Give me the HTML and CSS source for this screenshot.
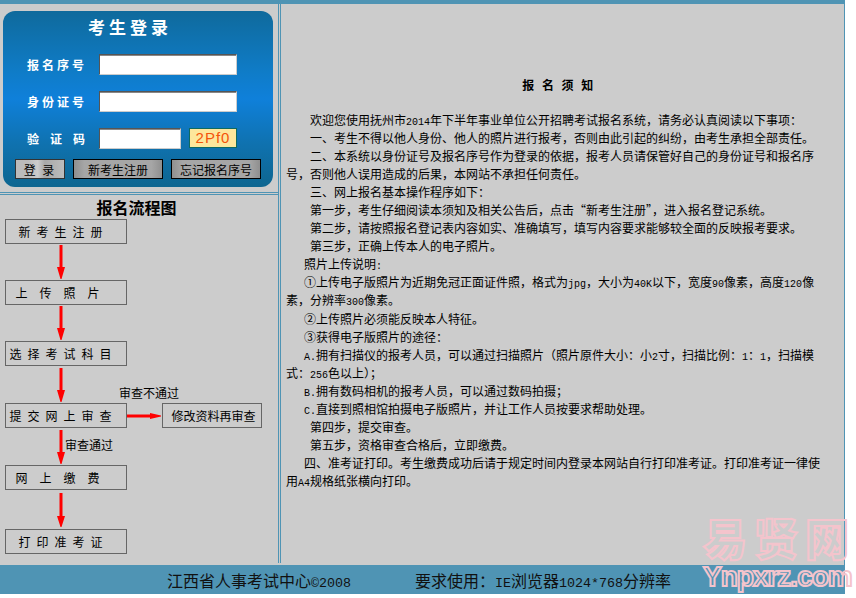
FILE: index.html
```html
<!DOCTYPE html>
<html lang="zh-CN">
<head>
    <meta charset="UTF-8">
    <meta name="viewport" content="width=device-width, initial-scale=1.0">
    <title>考生登录</title>
    <link rel="stylesheet" href="styles.css">
</head>
<body>
<div class="page">
    <div class="main">
        <div class="left">
            <div class="login-panel">
                <form class="login-card">
                    <h2 class="login-title">考生登录</h2>
                    <div class="login-row">
                        <label class="login-label" for="bmxh">报名序号</label>
                        <input class="login-input" type="text" id="bmxh">
                    </div>
                    <div class="login-row">
                        <label class="login-label" for="sfzh">身份证号</label>
                        <input class="login-input" type="text" id="sfzh">
                    </div>
                    <div class="login-row">
                        <label class="login-label wide" for="yzm">验证码</label>
                        <input class="login-input short" type="text" id="yzm">
                        <span class="captcha">2Pf0</span>
                    </div>
                    <div class="login-buttons">
                        <button class="btn btn-login" type="button">登 录</button>
                        <button class="btn btn-new" type="button">新考生注册</button>
                        <button class="btn btn-forgot" type="button">忘记报名序号</button>
                    </div>
                </form>
            </div>
            <div class="flow-panel">
                <h2 class="flow-title">报名流程图</h2>
                <div class="step s6">新考生注册</div>
                <div class="link h36">
                    <svg class="arrow" width="12" height="36" viewBox="0 0 12 36"><polygon fill="#f00" points="4.5,1 7.5,1 7.5,23 10,23 6.5,35 5.5,35 2,23 4.5,23"/></svg>
                </div>
                <div class="step s12">上传照片</div>
                <div class="link h36">
                    <svg class="arrow" width="12" height="36" viewBox="0 0 12 36"><polygon fill="#f00" points="4.5,1 7.5,1 7.5,23 10,23 6.5,35 5.5,35 2,23 4.5,23"/></svg>
                </div>
                <div class="step s6">选择考试科目</div>
                <div class="link h37">
                    <svg class="arrow" width="12" height="37" viewBox="0 0 12 37"><polygon fill="#f00" points="4.5,2 7.5,2 7.5,24 10,24 6.5,36 5.5,36 2,24 4.5,24"/></svg>
                </div>
                <div class="flow-row">
                    <div class="step s6">提交网上审查</div>
                    <svg class="arrow-right" width="35" height="12" viewBox="0 0 35 12"><polygon fill="#f00" points="0,4.5 23,4.5 23,3 34,5.5 34,6.5 23,9 23,7.5 0,7.5"/></svg>
                    <div class="step side">修改资料再审查</div>
                    <span class="note note-fail">审查不通过</span>
                </div>
                <div class="link h37">
                    <svg class="arrow" width="12" height="37" viewBox="0 0 12 37"><polygon fill="#f00" points="4.5,2 7.5,2 7.5,24 10,24 6.5,36 5.5,36 2,24 4.5,24"/></svg>
                    <span class="note note-pass">审查通过</span>
                </div>
                <div class="step s12">网上缴费</div>
                <div class="link h39">
                    <svg class="arrow" width="12" height="39" viewBox="0 0 12 39"><polygon fill="#f00" points="4.5,3 7.5,3 7.5,26 10,26 6.5,37 5.5,37 2,26 4.5,26"/></svg>
                </div>
                <div class="step s6">打印准考证</div>
            </div>
        </div>
        <div class="right">
            <h3 class="notice-title">报 名 须 知</h3>
            <div class="notice">
                <p class="in24">欢迎您使用抚州市<span class="lat">2014</span>年下半年事业单位公开招聘考试报名系统，请务必认真阅读以下事项：</p>
                <p class="in24">一、考生不得以他人身份、他人的照片进行报考，否则由此引起的纠纷，由考生承担全部责任。</p>
                <p class="in24">二、本系统以身份证号及报名序号作为登录的依据，报考人员请保管好自己的身份证号和报名序<br>号，否则他人误用造成的后果，本网站不承担任何责任。</p>
                <p class="in24">三、网上报名基本操作程序如下：</p>
                <p class="in24">第一步，考生仔细阅读本须知及相关公告后，点击“新考生注册”，进入报名登记系统。</p>
                <p class="in24">第二步，请按照报名登记表内容如实、准确填写，填写内容要求能够较全面的反映报考要求。</p>
                <p class="in24">第三步，正确上传本人的电子照片。</p>
                <p class="in18">照片上传说明<span class="lat">:</span></p>
                <p class="in18">①上传电子版照片为近期免冠正面证件照，格式为<span class="lat">jpg</span>，大小为<span class="lat">40K</span>以下，宽度<span class="lat">90</span>像素，高度<span class="lat">120</span>像<br>素，分辨率<span class="lat">300</span>像素。</p>
                <p class="in18">②上传照片必须能反映本人特征。</p>
                <p class="in18">③获得电子版照片的途径：</p>
                <p class="in18"><span class="lat">A.</span>拥有扫描仪的报考人员，可以通过扫描照片（照片原件大小：小<span class="lat">2</span>寸，扫描比例：<span class="lat">1</span>：<span class="lat">1</span>，扫描模<br>式：<span class="lat">256</span>色以上）；</p>
                <p class="in18"><span class="lat">B.</span>拥有数码相机的报考人员，可以通过数码拍摄；</p>
                <p class="in18"><span class="lat">C.</span>直接到照相馆拍摄电子版照片，并让工作人员按要求帮助处理。</p>
                <p class="in24">第四步，提交审查。</p>
                <p class="in24">第五步，资格审查合格后，立即缴费。</p>
                <p class="in18">四、准考证打印。考生缴费成功后请于规定时间内登录本网站自行打印准考证。打印准考证一律使<br>用<span class="lat">A4</span>规格纸张横向打印。</p>
            </div>
        </div>
    </div>
    <div class="footer">
        <span>江西省人事考试中心<span class="lat-big">©2008</span></span>
        <span>要求使用：<span class="lat-big">IE</span>浏览器<span class="lat-big">1024*768</span>分辨率</span>
    </div>
</div>
<div class="watermark">
    <div class="wm-cn">易贤网</div>
    <div class="wm-en">Ynpxrz.com</div>
</div>
</body>
</html>
```

FILE: styles.css
```css
* {
    box-sizing: border-box;
}

body {
    margin: 0;
    background-color: #fff;
    font-family: "Noto Sans CJK SC", "Liberation Sans", sans-serif;
    font-size: 12px;
    color: #000;
}

.page {
    width: 845px;
    height: 594px;
    display: flex;
    flex-direction: column;
    background-color: #ccc;
    border-top: 4px solid #4f94b4;
    border-right: 1px solid #4f94b4;
}

.main {
    flex: 1;
    display: flex;
    gap: 1px;
    min-height: 0;
}

.left {
    width: 279px;
    height: 559px;
    border-right: 1px solid #4f94b4;
}

.login-panel {
    height: 189px;
    padding: 7px 0 0 3px;
    border-bottom: 1px solid #4f94b4;
}

.login-card {
    width: 270px;
    height: 176px;
    padding-top: 5px;
    border-radius: 12px;
    background: linear-gradient(#0f6a9c 0%, #0f7cc8 35%, #0f80da 50%, #0f72b0 75%, #0e6690 100%);
}

.login-title {
    margin: 0 0 16px 0;
    padding-right: 16px;
    height: 22px;
    line-height: 22px;
    text-align: center;
    font-size: 17px;
    letter-spacing: 4px;
    color: #fff;
}

.login-row {
    display: flex;
    align-items: flex-start;
    height: 37px;
    padding-left: 23px;
}

.login-label {
    width: 73px;
    height: 21px;
    line-height: 22px;
    font-size: 12px;
    font-weight: bold;
    letter-spacing: 3px;
    color: #fff;
    padding-left: 1px;
}

.login-label.wide {
    letter-spacing: 11px;
}

.login-input {
    width: 138px;
    height: 21px;
    padding: 0;
    background-color: #fff;
    border: 1px solid;
    border-color: #555 #ccc #ccc #555;
    box-shadow: inset 0 1px 0 #888;
}

.login-input.short {
    width: 82px;
}

.captcha {
    width: 48px;
    height: 20px;
    margin-left: 8px;
    line-height: 18px;
    text-align: center;
    font-family: "Liberation Sans", sans-serif;
    font-size: 15px;
    letter-spacing: 1px;
    color: #f4540a;
    background-color: #fde79c;
    border: 1px solid #0e6a60;
}

.login-buttons {
    display: flex;
    gap: 8px;
    padding-left: 12px;
    margin-top: -6px;
}

.btn {
    height: 20px;
    padding: 0;
    font-family: inherit;
    font-size: 12px;
    color: #000;
    border: 1px solid #000;
    background: linear-gradient(90deg, #8f8f8f 0%, #a6a6a6 12%, #a6a6a6 88%, #8f8f8f 100%);
}

.btn-login {
    width: 50px;
    letter-spacing: 2px;
    border-color: #333;
    background: linear-gradient(90deg, #bbb 0%, #bbb 25%, #ccc 45%, #a8a8a8 60%, #bdbdbd 100%);
}

.btn-new {
    width: 90px;
}

.btn-forgot {
    width: 90px;
}

.flow-panel {
    height: 369px;
    margin-top: 1px;
    padding: 2px 0 0 5px;
    border-top: 1px solid #4f94b4;
}

.flow-title {
    margin: 0 0 2px 0;
    height: 20px;
    line-height: 20px;
    padding-right: 10px;
    text-align: center;
    font-size: 16px;
}

.step {
    width: 122px;
    height: 25px;
    display: flex;
    align-items: center;
    justify-content: center;
    padding-right: 5px;
    border: 1px solid #666;
    white-space: nowrap;
}

.s6 {
    letter-spacing: 6px;
}

.s12 {
    letter-spacing: 12px;
}

.side {
    width: 100px;
    padding: 0 0 0 3px;
}

.link {
    position: relative;
    padding-left: 50px;
}

.link svg {
    display: block;
}

.h36 { height: 36px; }
.h37 { height: 37px; }
.h39 { height: 39px; }

.flow-row {
    position: relative;
    display: flex;
    align-items: center;
}

.note {
    position: absolute;
    white-space: nowrap;
}

.note-fail {
    left: 114px;
    top: -19px;
}

.note-pass {
    left: 60px;
    top: 8px;
}

.right {
    flex: 1;
    height: 559px;
    padding: 72px 0 0 5px;
    border-left: 1px solid #4f94b4;
}

.notice-title {
    margin: 0 0 17px 0;
    height: 18px;
    line-height: 18px;
    padding-right: 12px;
    text-align: center;
    font-size: 12px;
    font-weight: bold;
    letter-spacing: 2.5px;
}

.notice {
    width: 540px;
    line-height: 18.05px;
}

.notice p {
    margin: 0;
}

.in24 {
    text-indent: 24px;
}

.in18 {
    text-indent: 18px;
}

.lat {
    font-family: "Liberation Mono", monospace;
    font-size: 10px;
    line-height: 1;
}

.footer {
    height: 29px;
    margin-top: 2px;
    display: flex;
    align-items: center;
    gap: 64px;
    padding-left: 167px;
    font-size: 16px;
    color: #111;
    background-color: #4f94b4;
}

.lat-big {
    font-family: "Liberation Mono", monospace;
    font-size: 13.33px;
    line-height: 1;
}

/* site watermark sits over the corner of the page */
.watermark {
    position: absolute;
    left: 703px;
    top: 514px;
    width: 146px;
    color: transparent;
    -webkit-text-stroke: 2px #f4c4cc;
    font-weight: 900;
    white-space: nowrap;
    pointer-events: none;
}

.wm-cn {
    height: 46px;
    line-height: 46px;
    font-size: 44px;
    letter-spacing: 7px;
}

.wm-en {
    height: 30px;
    margin-top: 2px;
    line-height: 30px;
    font-family: "Liberation Sans", sans-serif;
    font-size: 28px;
    letter-spacing: -1px;
}
```
